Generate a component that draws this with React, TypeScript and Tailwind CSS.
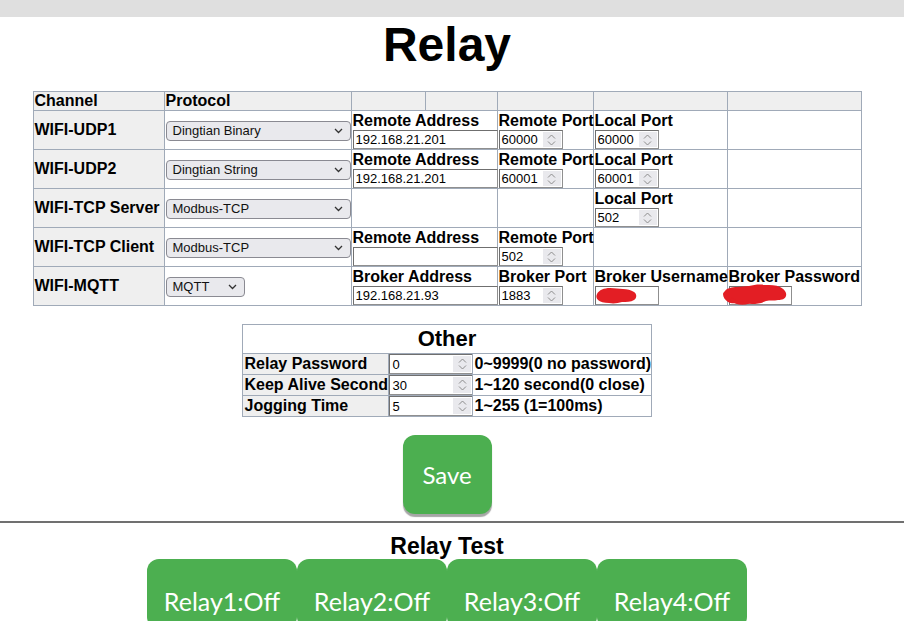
import React from "react";

const font = { fontFamily: '"Liberation Sans", Arial, sans-serif' };

function Chevron() {
  return (
    <svg width="9" height="6" viewBox="0 0 9 6" className="shrink-0">
      <path d="M1 1l3.5 3.5L8 1" fill="none" stroke="#333" strokeWidth="1.3" />
    </svg>
  );
}

function SelectBox({ value, w }: { value: string; w: string }) {
  return (
    <div
      className={`flex h-[20px] ${w} items-center justify-between rounded-[4px] border border-[#8a8a92] bg-[#e9e9ed] pl-[6px] pr-[7px] text-[13px] text-[#111]`}
    >
      <span>{value}</span>
      <Chevron />
    </div>
  );
}

function Spinner() {
  return (
    <div className="flex h-full w-[18px] flex-col items-center justify-center gap-[2px] bg-[#e9e9ed]">
      <svg width="9" height="5" viewBox="0 0 9 5">
        <path d="M1 4.5L4.5 1L8 4.5" fill="none" stroke="#8c8c8c" strokeWidth="1" />
      </svg>
      <svg width="9" height="5" viewBox="0 0 9 5">
        <path d="M1 0.5L4.5 4L8 0.5" fill="none" stroke="#8c8c8c" strokeWidth="1" />
      </svg>
    </div>
  );
}

function TextBox({ value, w }: { value?: string; w: string }) {
  return (
    <div
      className={`flex h-[19px] ${w} items-center border border-[#8f8f8f] border-t-[#6f6f6f] border-l-[#6f6f6f] bg-white pl-[2px] text-[13px] leading-none text-black`}
    >
      {value}
    </div>
  );
}

function NumBox({ value, w, h = "h-[19px]" }: { value: string; w: string; h?: string }) {
  return (
    <div
      className={`flex ${h} ${w} items-center justify-between border border-[#8f8f8f] border-t-[#6f6f6f] border-l-[#6f6f6f] bg-white py-[1px] pl-[2px] pr-[1px] text-[13px] leading-none text-black`}
    >
      <span>{value}</span>
      <Spinner />
    </div>
  );
}

function Labeled({ label, children }: { label: string; children: React.ReactNode }) {
  return (
    <div className="flex flex-col">
      <div className="whitespace-nowrap text-[16px] font-bold leading-[18px]">{label}</div>
      {children}
    </div>
  );
}

const bd = "border border-[#a0aab8]";
const td = `${bd} px-[1px] pt-[1px] pb-0 align-middle`;
const tdHead = `${bd} bg-[#efefef] px-[1px] py-0 text-left text-[16px] font-bold leading-[18px]`;
const tdName = `${bd} bg-[#efefef] px-[1px] py-0 text-[16px] font-bold whitespace-nowrap`;

// red marker scribbles hiding the credentials
function Scribble({ kind }: { kind: "user" | "pass" }) {
  if (kind === "user") {
    return (
      <svg width="42" height="17" viewBox="0 0 42 17" className="absolute left-[0px] top-[1px]">
        <path
          d="M2 7c2-4 7-6 13-6c5 0 9 1 13 1c4 0 8 1 11 3c3 2 3 6 0 8c-3 2-8 2-12 2c-4 1-8 2-13 1c-5 0-9-1-11-3c-2-2-2-4-1-6z"
          fill="#e31e24"
        />
      </svg>
    );
  }
  return (
    <svg width="68" height="21" viewBox="0 0 68 21" className="absolute left-[-7px] top-[-2px]">
      <path
        d="M3 7c2-3 7-4 12-4c4 0 8-1 12-1c5-1 10-2 16-1c5 0 11 0 15 2c4 2 7 5 6 9c-1 3-4 4-8 4c-4 1-8 0-12 1c-4 2-9 3-14 3c-5 0-8-1-12-1c-4 0-9 1-12-1c-3-2-5-5-5-8c0-1 1-2 2-3z"
        fill="#e31e24"
      />
      <path d="M9 15c5 4 12 5 18 3" stroke="#e31e24" strokeWidth="3" fill="none" />
    </svg>
  );
}

function OtherRow({ label, value, desc }: { label: string; value: string; desc: string }) {
  return (
    <tr>
      <td className={`${bd} bg-[#efefef] px-[1px] py-0 text-[16px] font-bold leading-[20px] whitespace-nowrap`}>
        {label}
      </td>
      <td className={`${bd} p-0`}>
        <NumBox value={value} w="w-[84px]" h="h-[20px]" />
      </td>
      <td className={`${bd} px-[1px] py-0 text-[16px] font-bold leading-[20px] whitespace-nowrap`}>{desc}</td>
    </tr>
  );
}

export default function App() {
  return (
    <div className="min-h-screen bg-white text-black" style={font}>
      <div className="h-[17px] bg-[#dfdfdf]" />
      <div className="flex w-[894px] flex-col items-center">
        <h1 className="mt-[1px] text-[48px] font-bold leading-[54px]">Relay</h1>

        <table className="mt-[19px] w-[828px] table-fixed border-collapse">
          <colgroup>
            <col className="w-[131px]" />
            <col className="w-[187px]" />
            <col className="w-[74px]" />
            <col className="w-[72px]" />
            <col className="w-[96px]" />
            <col className="w-[134px]" />
            <col className="w-[134px]" />
          </colgroup>
          <thead>
            <tr>
              <th className={tdHead}>Channel</th>
              <th className={tdHead}>Protocol</th>
              <th className={tdHead}></th>
              <th className={tdHead}></th>
              <th className={tdHead}></th>
              <th className={tdHead}></th>
              <th className={tdHead}></th>
            </tr>
          </thead>
          <tbody>
            <tr>
              <td className={tdName}>WIFI-UDP1</td>
              <td className={td}>
                <SelectBox value="Dingtian Binary" w="w-[185px]" />
              </td>
              <td className={td} colSpan={2}>
                <Labeled label="Remote Address">
                  <TextBox value="192.168.21.201" w="w-[145px]" />
                </Labeled>
              </td>
              <td className={td}>
                <Labeled label="Remote Port">
                  <NumBox value="60000" w="w-[64px]" />
                </Labeled>
              </td>
              <td className={td}>
                <Labeled label="Local Port">
                  <NumBox value="60000" w="w-[64px]" />
                </Labeled>
              </td>
              <td className={td}></td>
            </tr>
            <tr>
              <td className={tdName}>WIFI-UDP2</td>
              <td className={td}>
                <SelectBox value="Dingtian String" w="w-[185px]" />
              </td>
              <td className={td} colSpan={2}>
                <Labeled label="Remote Address">
                  <TextBox value="192.168.21.201" w="w-[145px]" />
                </Labeled>
              </td>
              <td className={td}>
                <Labeled label="Remote Port">
                  <NumBox value="60001" w="w-[64px]" />
                </Labeled>
              </td>
              <td className={td}>
                <Labeled label="Local Port">
                  <NumBox value="60001" w="w-[64px]" />
                </Labeled>
              </td>
              <td className={td}></td>
            </tr>
            <tr>
              <td className={tdName}>WIFI-TCP Server</td>
              <td className={td}>
                <SelectBox value="Modbus-TCP" w="w-[185px]" />
              </td>
              <td className={td} colSpan={2}></td>
              <td className={td}></td>
              <td className={td}>
                <Labeled label="Local Port">
                  <NumBox value="502" w="w-[64px]" />
                </Labeled>
              </td>
              <td className={td}></td>
            </tr>
            <tr>
              <td className={tdName}>WIFI-TCP Client</td>
              <td className={td}>
                <SelectBox value="Modbus-TCP" w="w-[185px]" />
              </td>
              <td className={td} colSpan={2}>
                <Labeled label="Remote Address">
                  <TextBox w="w-[145px]" />
                </Labeled>
              </td>
              <td className={td}>
                <Labeled label="Remote Port">
                  <NumBox value="502" w="w-[64px]" />
                </Labeled>
              </td>
              <td className={td}></td>
              <td className={td}></td>
            </tr>
            <tr>
              <td className={tdName}>WIFI-MQTT</td>
              <td className={td}>
                <SelectBox value="MQTT" w="w-[79px]" />
              </td>
              <td className={td} colSpan={2}>
                <Labeled label="Broker Address">
                  <TextBox value="192.168.21.93" w="w-[145px]" />
                </Labeled>
              </td>
              <td className={td}>
                <Labeled label="Broker Port">
                  <NumBox value="1883" w="w-[64px]" />
                </Labeled>
              </td>
              <td className={td}>
                <Labeled label="Broker Username">
                  <div className="relative w-[64px]">
                    <TextBox w="w-[64px]" />
                    <Scribble kind="user" />
                  </div>
                </Labeled>
              </td>
              <td className={td}>
                <Labeled label="Broker Password">
                  <div className="relative w-[63px]">
                    <TextBox w="w-[63px]" />
                    <Scribble kind="pass" />
                  </div>
                </Labeled>
              </td>
            </tr>
          </tbody>
        </table>

        <table className="mt-[18px] w-[408px] table-fixed border-collapse">
          <colgroup>
            <col className="w-[146px]" />
            <col className="w-[84px]" />
            <col className="w-[178px]" />
          </colgroup>
          <tbody>
            <tr>
              <td colSpan={3} className={`${bd} p-0 text-center text-[22px] font-bold leading-[28px]`}>
                Other
              </td>
            </tr>
            <OtherRow label="Relay Password" value="0" desc="0~9999(0 no password)" />
            <OtherRow label="Keep Alive Second" value="30" desc="1~120 second(0 close)" />
            <OtherRow label="Jogging Time" value="5" desc="1~255 (1=100ms)" />
          </tbody>
        </table>

        <button
          className="mt-[18px] flex h-[79px] w-[89px] items-center justify-center rounded-[12px] bg-[#4caf50] text-[24px] text-white shadow-[0_3px_1px_rgba(0,0,0,0.35)]"
          style={{ fontFamily: "Lato, sans-serif" }}
        >
          Save
        </button>
      </div>

      <div className="mt-[7px] border-t-2 border-[#707070]" />

      <div className="flex w-[894px] flex-col items-center">
        <h2 className="mt-[10px] text-[23px] font-bold leading-[26px]">Relay Test</h2>
        <div className="flex items-start" style={{ fontFamily: "Lato, sans-serif" }}>
          {["Relay1:Off", "Relay2:Off", "Relay3:Off", "Relay4:Off"].map((r) => (
            <button
              key={r}
              className="h-[70px] w-[150px] rounded-[12px] bg-[#4caf50] pt-[13px] text-[25px] leading-[30px] text-white"
            >
              <span className="block">{r}</span>
            </button>
          ))}
        </div>
      </div>
    </div>
  );
}
